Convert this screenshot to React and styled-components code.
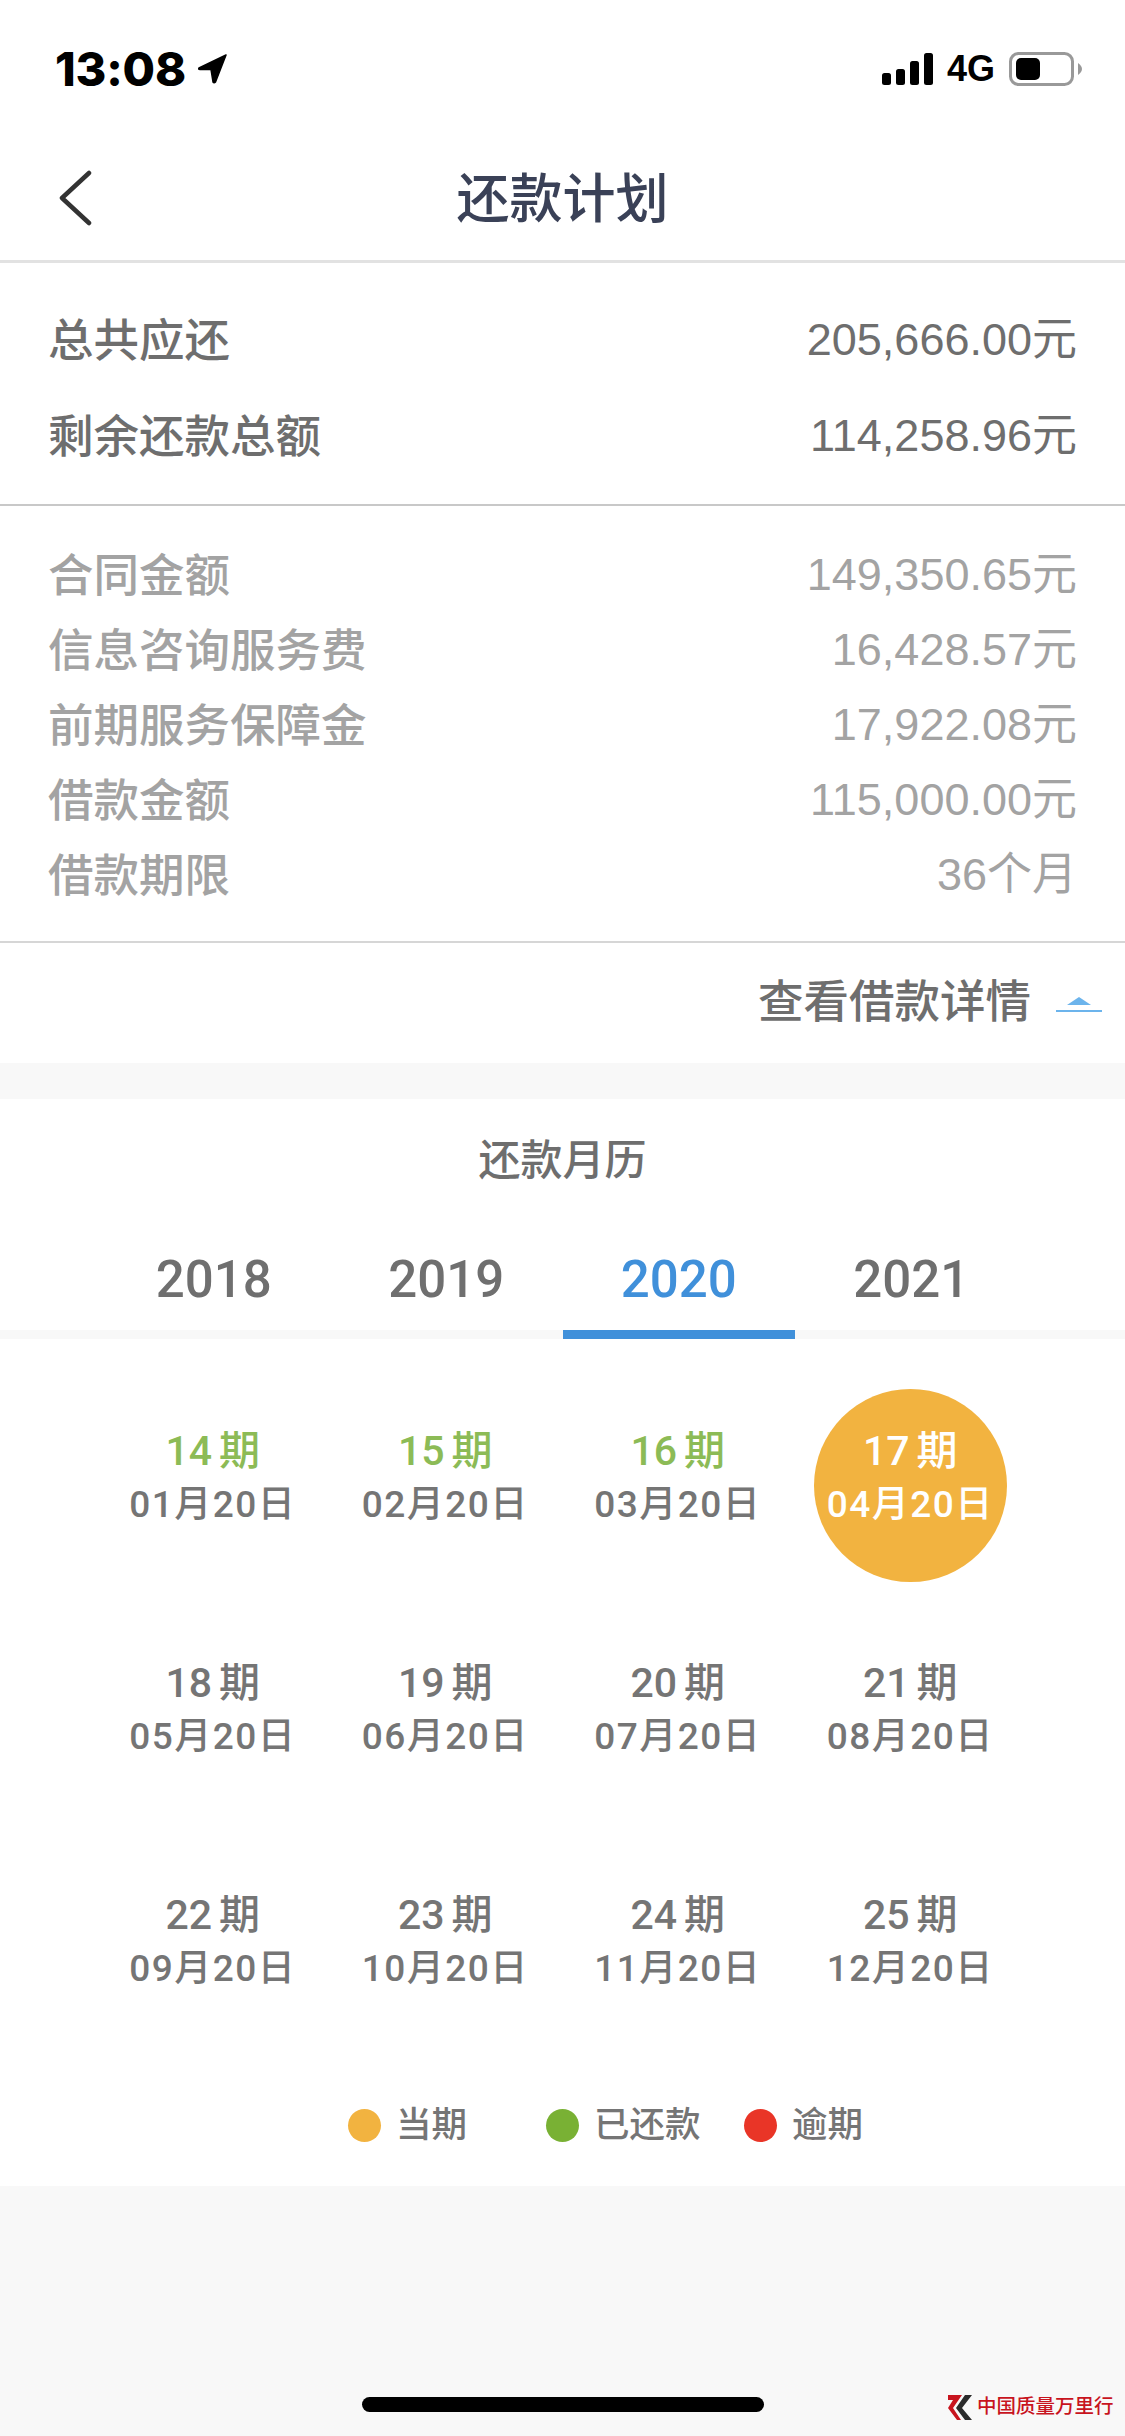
import React from 'react';
import styled, { createGlobalStyle } from 'styled-components';

const SANS = `"Liberation Sans", "Noto Sans CJK SC", sans-serif`;
const NUMERIC = `"Roboto", "Noto Sans CJK SC", sans-serif`;

// ─── Data ─────────────────────────────────────────────────────
const summary = [
  ['总共应还', '205,666.00元'],
  ['剩余还款总额', '114,258.96元'],
];

const details = [
  ['合同金额', '149,350.65元'],
  ['信息咨询服务费', '16,428.57元'],
  ['前期服务保障金', '17,922.08元'],
  ['借款金额', '115,000.00元'],
  ['借款期限', '36个月'],
];

const years = ['2018', '2019', '2020', '2021'];

const periods = [
  ['14', '01', 'paid'], ['15', '02', 'paid'], ['16', '03', 'paid'], ['17', '04', 'current'],
  ['18', '05'], ['19', '06'], ['20', '07'], ['21', '08'],
  ['22', '09'], ['23', '10'], ['24', '11'], ['25', '12'],
];

const legend = [
  ['#f2b340', '当期'],
  ['#79b134', '已还款'],
  ['#e93527', '逾期'],
];

// ─── Styles ───────────────────────────────────────────────────
const GlobalStyle = createGlobalStyle`
  html, body { margin: 0; padding: 0; background: #f8f8f8; }
  * { box-sizing: border-box; }
`;

const Page = styled.div`
  position: relative;
  width: 1125px;
  height: 2436px;
  overflow: hidden;
  background: #f8f8f8;
  font-family: ${SANS};
`;

const Header = styled.header`
  background: #fff;
`;

const StatusBar = styled.div`
  display: flex;
  align-items: center;
  justify-content: space-between;
  height: 137px;
  padding: 0 43px 0 55px;
`;

const StatusLeft = styled.div`
  display: flex;
  align-items: center;
  gap: 12px;
`;

const Time = styled.span`
  font-family: "Inter", "Liberation Sans", sans-serif;
  font-size: 47px;
  font-weight: 800;
  letter-spacing: -0.2px;
  color: #000;
`;

const StatusRight = styled.div`
  display: flex;
  align-items: center;
  gap: 14px;
`;

const Network = styled.span`
  font-size: 36px;
  font-weight: 700;
  color: #000;
`;

const NavBar = styled.nav`
  position: relative;
  display: flex;
  align-items: center;
  justify-content: center;
  height: 126px;
  padding-bottom: 8px;
  border-bottom: 3px solid #e2e2e2;
`;

const BackIcon = styled.svg`
  position: absolute;
  left: 58px;
  top: 33px;
`;

const Title = styled.h1`
  margin: 0;
  font-size: 53px;
  font-weight: 500;
  color: #3a4157;
`;

const Summary = styled.section`
  padding: 28px 48px 21px;
  background: #fff;
  border-bottom: 2px solid #c8c8c8;
`;

const Details = styled.section`
  padding: 31px 48px 29px;
  background: #fff;
  border-bottom: 2px solid #d6d6d6;
`;

const Row = styled.div`
  display: flex;
  align-items: center;
  justify-content: space-between;
  height: ${({ $tall }) => ($tall ? '96px' : '75px')};
  font-size: 45px;
  line-height: 1;
  color: ${({ $tall }) => ($tall ? '#6e6e6e' : '#a3a3a3')};
`;

const RowLabel = styled.span`
  padding-top: 5px;
  font-size: 45.5px;
  font-weight: 500;
`;

const MoreLink = styled.div`
  display: flex;
  align-items: center;
  justify-content: flex-end;
  gap: 25px;
  height: 120px;
  padding-right: 23px;
  background: #fff;
  font-size: 45.5px;
  line-height: 1;
  font-weight: 500;
  color: #6e6e6e;
`;

const Calendar = styled.section`
  margin-top: 36px;
  height: 1087px;
  background: #fff;
`;

const CalendarTitle = styled.h2`
  margin: 0;
  padding-top: 37px;
  height: 141px;
  line-height: 50px;
  text-align: center;
  font-size: 42px;
  font-weight: 500;
  color: #6e6e6e;
`;

const Tabs = styled.div`
  display: grid;
  grid-template-columns: repeat(4, 232.5px);
  justify-content: center;
  height: 99px;
  background: linear-gradient(#fff 90px, #f8f8f8 90px);
`;

const Tab = styled.div`
  height: 99px;
  padding-top: 9px;
  line-height: 62px;
  text-align: center;
  font-family: "Roboto", sans-serif;
  font-size: 51px;
  font-weight: 500;
  color: ${({ $active }) => ($active ? '#4090da' : '#6f6f6f')};
  border-bottom: 9px solid ${({ $active }) => ($active ? '#4090da' : 'transparent')};
`;

const Grid = styled.div`
  display: grid;
  grid-template-columns: repeat(4, 232.5px);
  grid-auto-rows: 232px;
  justify-content: center;
  padding: 30px 2px 0 0;
`;

const Cell = styled.div`
  display: flex;
  align-items: center;
  justify-content: center;
`;

const Period = styled.div`
  display: flex;
  flex-direction: column;
  align-items: center;
  justify-content: center;
  width: 193px;
  height: 193px;
  padding-bottom: 14px;
  border-radius: 50%;
  background: ${({ $status }) => ($status === 'current' ? '#f2b340' : 'transparent')};
  color: ${({ $status }) => ($status === 'current' ? '#fff' : '#757575')};
`;

const PeriodNo = styled.div`
  display: flex;
  gap: 7px;
  line-height: 53px;
  font-family: ${NUMERIC};
  font-size: 41px;
  font-weight: 500;
  color: ${({ $status }) => ($status === 'paid' ? '#8cbb56' : 'inherit')};
`;

const PeriodDate = styled.div`
  line-height: 53px;
  font-family: ${NUMERIC};
  font-size: 37px;
  font-weight: 500;
  letter-spacing: 1.5px;
  white-space: nowrap;
`;

const Legend = styled.div`
  display: grid;
  grid-template-columns: repeat(3, 198px);
  padding: 44px 0 0 348px;
`;

const LegendItem = styled.div`
  display: flex;
  align-items: center;
  gap: 15px;
  height: 33px;
  font-size: 35.5px;
  line-height: 1;
  font-weight: 500;
  color: #757575;
`;

const Dot = styled.span`
  width: 33px;
  height: 33px;
  border-radius: 50%;
  background: ${({ $color }) => $color};
`;

const HomeIndicator = styled.div`
  position: absolute;
  left: 362px;
  top: 2397px;
  width: 402px;
  height: 15px;
  border-radius: 8px;
  background: #000;
`;

const Watermark = styled.div`
  position: absolute;
  left: 948px;
  top: 2393px;
  display: flex;
  align-items: center;
  gap: 5px;
  font-family: "Liberation Serif", "Noto Sans CJK SC", serif;
  font-size: 19.5px;
  line-height: 28px;
  font-weight: 500;
  white-space: nowrap;
  color: #c8141e;
`;

// ─── Icons ────────────────────────────────────────────────────
const LocationArrow = () => (
  <svg width="30" height="30" viewBox="0 0 30 30">
    <path d="M28 1 L1 14 Q0 15.5 2 15.5 L13 15.5 L15 28 Q16 29.5 17.5 28 Z" fill="#000" stroke="#000" strokeWidth="1.5" strokeLinejoin="round" />
  </svg>
);

const Signal = () => (
  <svg width="51" height="32" viewBox="0 0 51 32">
    <rect x="0" y="20" width="9" height="12" rx="2.5" fill="#000" />
    <rect x="14" y="16" width="9" height="16" rx="2.5" fill="#000" />
    <rect x="28" y="8" width="9" height="24" rx="2.5" fill="#000" />
    <rect x="42" y="0" width="9" height="32" rx="2.5" fill="#000" />
  </svg>
);

const Battery = () => (
  <svg width="73" height="34" viewBox="0 0 73 34">
    <rect x="1.5" y="1.5" width="62" height="31" rx="8" fill="none" stroke="#999" strokeWidth="3" />
    <rect x="7" y="6" width="24" height="22" rx="5" fill="#000" />
    <path d="M69 11 Q73 14 73 17 Q73 20 69 23 Z" fill="#999" />
  </svg>
);

const Chevron = () => (
  <BackIcon width="34" height="56" viewBox="0 0 34 56">
    <path d="M31 3 L4 28 L31 53" fill="none" stroke="#333" strokeWidth="4.5" strokeLinecap="round" strokeLinejoin="round" />
  </BackIcon>
);

const Collapse = () => (
  <svg width="46" height="18" viewBox="0 0 46 18">
    <path d="M11 11 L23 3 L35 11 Z" fill="#6cb4ec" />
    <rect x="0" y="16" width="46" height="2" fill="#6cb4ec" />
  </svg>
);

const WatermarkLogo = () => (
  <svg width="24" height="25" viewBox="0 0 24 25">
    <path d="M0 0 L14 0 L5 13 L13 25 L9 25 L0 13 L5 5 L0 5 Z" fill="#c8141e" />
    <path d="M17 0 L24 0 L14 13 L24 25 L17 25 L8 13 Z" fill="#2b2b2b" />
  </svg>
);

// ─── Component ────────────────────────────────────────────────
const App = () => (
  <Page>
    <GlobalStyle />
    <Header>
      <StatusBar>
        <StatusLeft>
          <Time>13:08</Time>
          <LocationArrow />
        </StatusLeft>
        <StatusRight>
          <Signal />
          <Network>4G</Network>
          <Battery />
        </StatusRight>
      </StatusBar>
      <NavBar>
        <Chevron />
        <Title>还款计划</Title>
      </NavBar>
    </Header>

    <Summary>
      {summary.map(([label, value]) => (
        <Row $tall key={label}>
          <RowLabel>{label}</RowLabel>
          <span>{value}</span>
        </Row>
      ))}
    </Summary>

    <Details>
      {details.map(([label, value]) => (
        <Row key={label}>
          <RowLabel>{label}</RowLabel>
          <span>{value}</span>
        </Row>
      ))}
    </Details>

    <MoreLink>
      <span>查看借款详情</span>
      <Collapse />
    </MoreLink>

    <Calendar>
      <CalendarTitle>还款月历</CalendarTitle>
      <Tabs>
        {years.map((year) => (
          <Tab key={year} $active={year === '2020'}>{year}</Tab>
        ))}
      </Tabs>
      <Grid>
        {periods.map(([no, month, status]) => (
          <Cell key={no}>
            <Period $status={status}>
              <PeriodNo $status={status}>
                <span>{no}</span>
                <span>期</span>
              </PeriodNo>
              <PeriodDate>{month}月20日</PeriodDate>
            </Period>
          </Cell>
        ))}
      </Grid>
      <Legend>
        {legend.map(([color, label]) => (
          <LegendItem key={label}>
            <Dot $color={color} />
            {label}
          </LegendItem>
        ))}
      </Legend>
    </Calendar>

    <HomeIndicator />
    <Watermark>
      <WatermarkLogo />
      中国质量万里行
    </Watermark>
  </Page>
);

export default App;
